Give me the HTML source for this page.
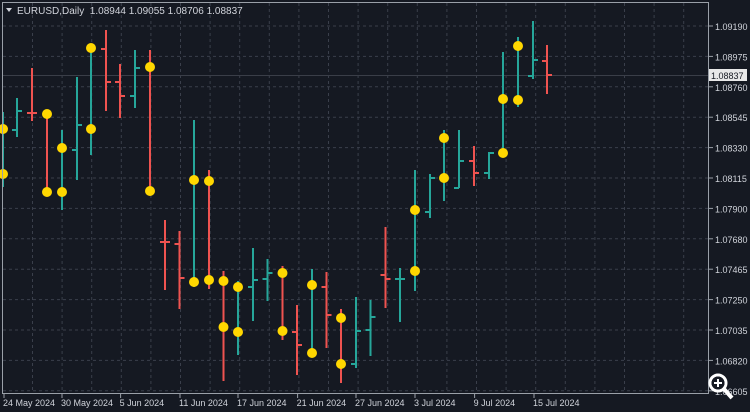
<!DOCTYPE html>
<html><head><meta charset="utf-8"><style>
html,body{margin:0;padding:0;background:#151922;width:750px;height:412px;overflow:hidden}
svg{display:block}
text{font-family:"Liberation Sans",sans-serif;font-size:9px;fill:#d0d3da}
</style></head><body>
<svg id="s" width="750" height="412" xmlns="http://www.w3.org/2000/svg">
<rect width="750" height="412" fill="#151922"/>
<g id="grid" stroke="#3a3f4b" stroke-dasharray="3,3" stroke-width="1"></g>
<line x1="3" y1="75.5" x2="708" y2="75.5" stroke="#3a3e48" stroke-width="1"/>
<g id="bars"></g>
<rect x="2.5" y="2.5" width="706" height="391" fill="none" stroke="#9aa0a8" stroke-width="1"/>
<text x="17" y="14" style="font-size:10px">EURUSD,Daily&#160;&#160;1.08944 1.09055 1.08706 1.08837</text>
<path d="M6 8 L12 8 L9 12 Z" fill="#d0d3da"/>
<g id="ax"></g>
<rect x="709" y="69" width="38" height="12" fill="#e8e8e8"/>
<text x="711" y="79" style="fill:#151922">1.08837</text>
<g fill="none" stroke="#fff" stroke-width="3">
<circle cx="718" cy="383" r="8"/><line x1="724" y1="389" x2="732" y2="398" stroke-width="4"/>
</g>
<circle cx="718" cy="383" r="6.5" fill="#151922"/>
<path d="M714 383h8M718 379v8" stroke="#fff" stroke-width="2"/>
</svg>
<script>
var NS="http://www.w3.org/2000/svg";
function el(p,t,a){var e=document.createElementNS(NS,t);for(var k in a)e.setAttribute(k,a[k]);p.appendChild(e);return e;}
var g=document.getElementById('grid'),ax=document.getElementById('ax');
var prices=["1.09190","1.08975","1.08760","1.08545","1.08330","1.08115","1.07900","1.07680","1.07465","1.07250","1.07035","1.06820","1.06605"];
for(var i=0;i<13;i++){var y=26+i*30.4;el(g,'line',{x1:3,x2:708,y1:y,y2:y});
el(ax,'line',{x1:709,x2:713,y1:y,y2:y,stroke:'#9aa0a8'});
var t=el(ax,'text',{x:715,y:y+4});t.textContent=prices[i];}
for(var x=32.5;x<708;x+=29.6){el(g,'line',{x1:x,x2:x,y1:3,y2:393});}
var dates=["24 May 2024","30 May 2024","5 Jun 2024","11 Jun 2024","17 Jun 2024","21 Jun 2024","27 Jun 2024","3 Jul 2024","9 Jul 2024","15 Jul 2024"];
var dx=[4,62,120.6,180,238,297.6,356,415,474.6,534];
for(var i=0;i<10;i++){el(ax,'line',{x1:dx[i],x2:dx[i],y1:394,y2:398,stroke:'#9aa0a8'});var t=el(ax,'text',{x:dx[i]-1,y:406,style:'font-size:9px'});t.textContent=dates[i];}
var G="#26a69a",R="#ef5350";
var B=[
[3,G,112,187,null,null,[129,174]],
[17,G,98,137,130,111],
[32,R,68,121,113,113],
[47,R,114,192,null,null,[114,192]],
[62,G,130,210,null,null,[148,192]],
[77,G,77,180,150,125],
[91,G,48,155,null,null,[48,129]],
[106,R,30,111,49,82],
[120,R,64,118,82,96],
[135,G,50,108,96,68],
[150,R,50,191,null,null,[67,191]],
[165,R,220,290,242,242],
[179.5,R,231,309,244,278],
[194,G,120,287,null,null,[180,282]],
[209,R,170,289,null,null,[181,280]],
[223.5,R,271,381,null,null,[281,327]],
[238,G,281,355,null,null,[287,332]],
[253,G,248,321,287,280],
[267.5,G,259,301,279,273],
[282.5,R,266,340,null,null,[273,331]],
[297,R,305,375,332,345],
[312,G,269,354,null,null,[285,353]],
[326.5,R,272,348,287,315],
[341,R,309,383,null,null,[318,364]],
[356,G,297,368,364,331],
[370.5,G,300,356,330,317],
[385.5,R,227,308,275,279],
[400,G,268,322,279,279],
[415,G,170,291,null,null,[210,271]],
[430,G,174,218,212,178],
[444,G,130,201,null,null,[138,178]],
[459,G,130,188,188,161],
[474,R,146,186,161,173],
[489,G,152,179,173,153],
[503,G,52,156,null,null,[99,153]],
[518,G,37,107,null,null,[46,100]],
[533,G,21,79,76,60],
[547,R,45,94,61,75]];
var b=document.getElementById('bars');
B.forEach(function(r){var x=r[0],c=r[1];
el(b,'line',{x1:x,x2:x,y1:r[2],y2:r[3],stroke:c,'stroke-width':2});
if(r[4]!=null){el(b,'line',{x1:x-5,x2:x,y1:r[4],y2:r[4],stroke:c,'stroke-width':2});
el(b,'line',{x1:x,x2:x+5,y1:r[5],y2:r[5],stroke:c,'stroke-width':2});}
if(r[6])r[6].forEach(function(y){el(b,'circle',{cx:x,cy:y,r:5,fill:'#ffd700'});});
});
</script>
</body></html>
